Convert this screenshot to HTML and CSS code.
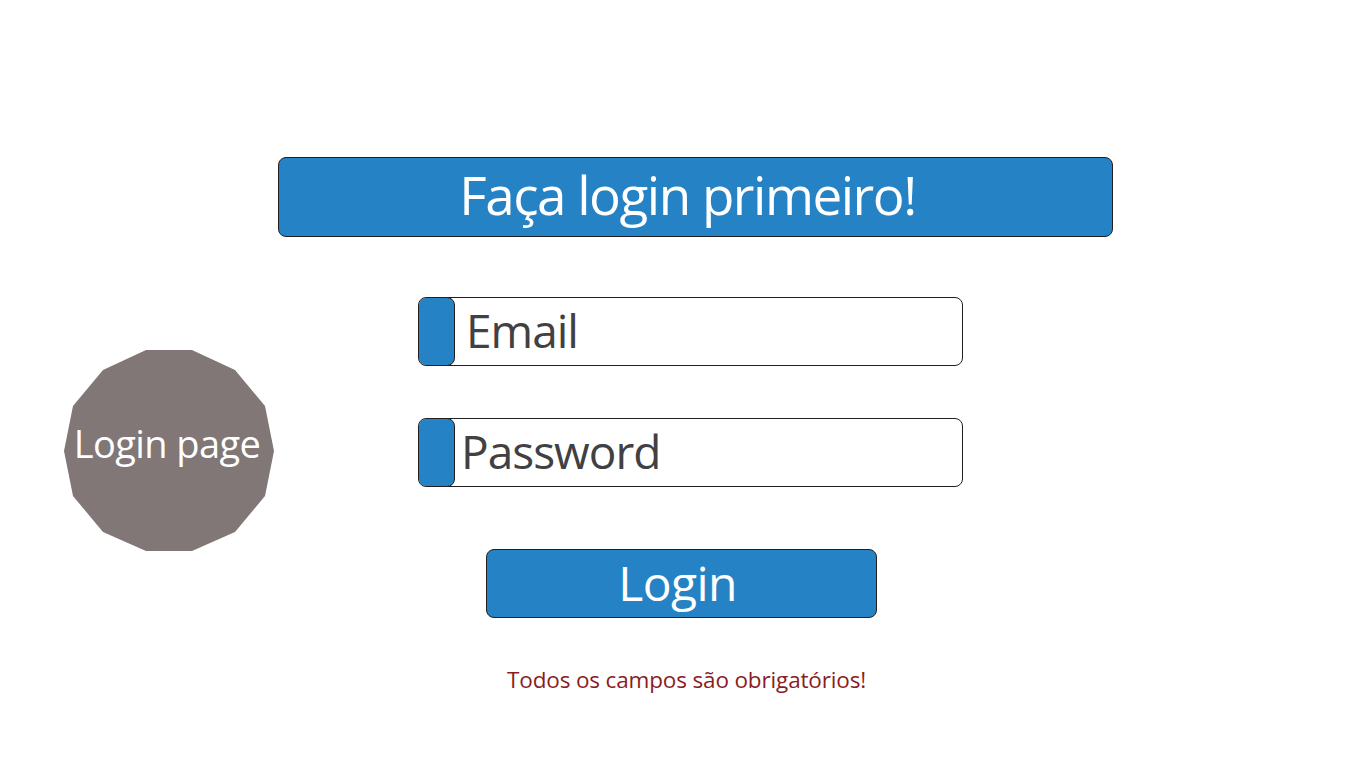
FILE: index.html
```html
<!DOCTYPE html>
<html lang="pt">
<head>
<meta charset="utf-8">
<title>Login page</title>
<link rel="stylesheet" href="styles.css">
</head>
<body>
<div class="page">
  <aside class="side">
    <div class="badge">
      <svg class="badge-shape" viewBox="0 0 210 201" width="210" height="201" aria-hidden="true">
        <polygon points="82,0 128,0 171,20 201,56 210,101 201,146 171,182 128,201 82,201 39,182 9,146 0,101 9,56 39,20" fill="#807776"/>
      </svg>
      <span class="badge-text">Login page</span>
    </div>
  </aside>
  <main class="main">
    <h1 class="title">Faça login primeiro!</h1>
    <div class="field field-email">
      <span class="tab"></span>
      <span class="label">Email</span>
    </div>
    <div class="field field-pass">
      <span class="tab"></span>
      <span class="label">Password</span>
    </div>
    <button class="btn" type="button">Login</button>
    <p class="note">Todos os campos são obrigatórios!</p>
  </main>
</div>
</body>
</html>
```

FILE: styles.css
```css
* { box-sizing: border-box; }
html, body { margin: 0; padding: 0; background: #fff; }
body {
  font-family: "Open Sans", "Noto Sans", "DejaVu Sans", sans-serif;
  width: 1366px;
  height: 768px;
  overflow: hidden;
}
.page {
  display: flex;
  align-items: flex-start;
}
.side {
  width: 278px;
  padding-left: 64px;
  padding-top: 350px;
}
.badge {
  position: relative;
  width: 210px;
  height: 201px;
}
.badge-shape { display: block; }
.badge-text {
  position: absolute;
  left: 0; right: 0;
  top: 68px;
  text-align: center;
  color: #fff;
  font-size: 38px;
  letter-spacing: -0.6px;
  line-height: 50px;
  white-space: nowrap;
  padding-right: 4px;
}
.main {
  padding-top: 157px;
  display: flex;
  flex-direction: column;
  align-items: flex-start;
}
.title {
  margin: 0;
  width: 835px;
  height: 80px;
  background: #2582c5;
  border: 1px solid #231f20;
  border-radius: 8px;
  color: #fff;
  font-weight: 400;
  font-size: 53px;
  letter-spacing: -1.5px;
  line-height: 74px;
  text-align: center;
  padding-right: 16px;
}
.field {
  margin-left: 140px;
  width: 545px;
  height: 69px;
  border: 1px solid #231f20;
  border-radius: 8px;
  display: flex;
  align-items: center;
  overflow: hidden;
}
.field-email { margin-top: 60px; }
.field-pass { margin-top: 52px; }
.tab {
  align-self: stretch;
  width: 37px;
  margin: -1px 0 -1px -1px;
  background: #2582c5;
  border: 1px solid #231f20;
  border-radius: 8px;
  flex: none;
}
.label {
  color: #414042;
  font-size: 46px;
  letter-spacing: -1px;
  line-height: 60px;
  margin-top: -4px;
}
.field-email .label { margin-left: 11px; }
.field-pass .label { margin-left: 6px; }
.btn {
  margin: 62px 0 0 208px;
  width: 391px;
  height: 69px;
  background: #2582c5;
  border: 1px solid #231f20;
  border-radius: 8px;
  color: #fff;
  font-family: inherit;
  font-size: 48px;
  letter-spacing: -0.6px;
  line-height: 60px;
  padding: 0 8px 2px 0;
  text-align: center;
}
.note {
  margin: 47px 0 0 229px;
  color: #8b1c1f;
  font-size: 22.5px;
  letter-spacing: -0.15px;
  line-height: 30px;
}
```
